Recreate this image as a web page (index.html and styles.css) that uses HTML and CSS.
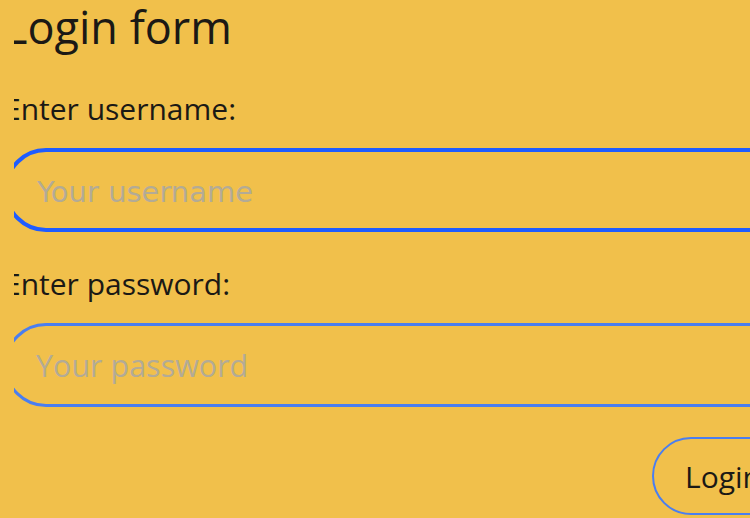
FILE: index.html
```html
<!DOCTYPE html>
<html lang="en">
<head>
<meta charset="utf-8">
<title>Login form</title>
<link rel="stylesheet" href="styles.css">
</head>
<body>
<div class="clip">
  <form class="login">
    <h1 class="title">Login form</h1>
    <label class="label" for="user">Enter username:</label>
    <input class="field field-focus" id="user" type="text" placeholder="Your username">
    <label class="label label-2" for="pass">Enter password:</label>
    <input class="field" id="pass" type="password" placeholder="Your password">
    <div class="actions">
      <button class="btn" type="button">Login</button>
    </div>
  </form>
</div>
</body>
</html>
```

FILE: styles.css
```css
html, body {
  margin: 0;
  padding: 0;
  background: #f1c04b;
  overflow: hidden;
  height: 100%;
}
.clip {
  margin-left: 14px;
  overflow: hidden;
  height: 100%;
}
.login {
  margin-left: -10px;
  width: 790px;
  display: flex;
  flex-direction: column;
  font-family: "Open Sans", "Lato", sans-serif;
  color: #1b1915;
}
.title {
  margin: 0;
  font-weight: 400;
  font-size: 45px;
  line-height: 54px;
}
.label {
  margin-top: 37px;
  font-size: 30px;
  line-height: 36px;
}
.label-2 {
  margin-top: 34px;
}
.field {
  box-sizing: border-box;
  margin-top: 21px;
  width: 100%;
  height: 84px;
  border: 3px solid #4a7ef0;
  border-radius: 42px;
  background: transparent;
  padding: 0 0 0 29px;
  font-family: "Open Sans", sans-serif;
  font-size: 30.5px;
  color: #1b1915;
  outline: none;
}
.field::placeholder {
  color: #b3ab96;
}
.field-focus {
  border: 4px solid #1f5cff;
}
.field-focus::placeholder {
  font-family: "DejaVu Sans", sans-serif;
  font-size: 29px;
}
.actions {
  display: flex;
  justify-content: flex-end;
  margin-top: 30px;
}
.btn {
  height: 78px;
  padding: 0 31px;
  border: 2px solid #4a7ef0;
  border-radius: 39px;
  background: transparent;
  font-family: "Open Sans", sans-serif;
  font-size: 30px;
  color: #1b1915;
}
```
